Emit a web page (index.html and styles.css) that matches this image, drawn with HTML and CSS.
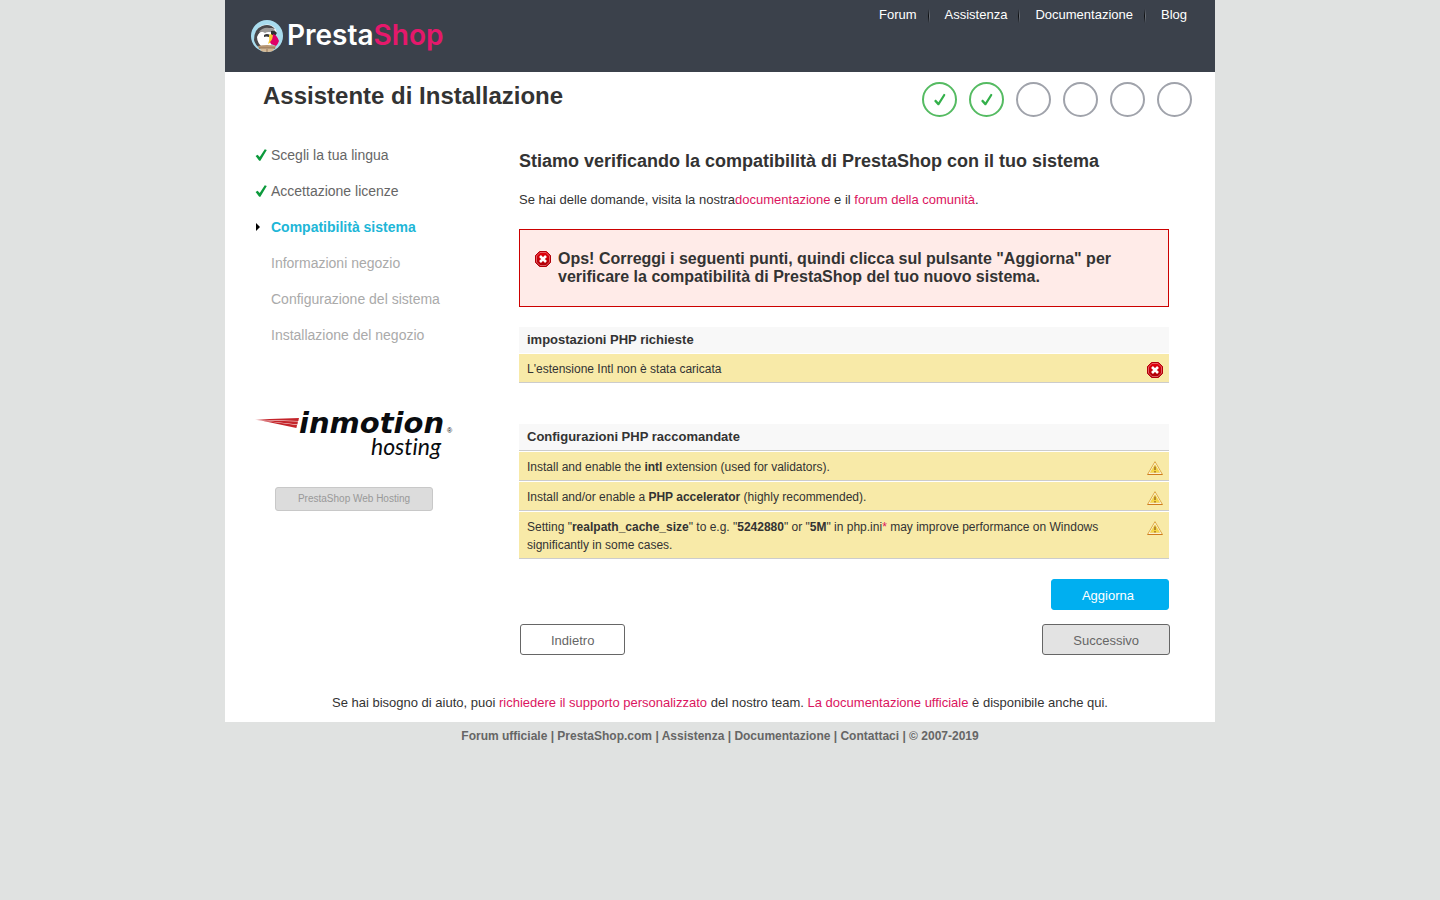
FILE: index.html
```html
<!DOCTYPE html>
<html lang="it">
<head>
    <meta charset="UTF-8">
    <meta name="viewport" content="width=device-width, initial-scale=1.0">
    <title>PrestaShop - Assistente di Installazione</title>
    <link rel="stylesheet" href="styles.css">
</head>
<body>
    <!-- shared icons -->
    <svg class="sprite" aria-hidden="true">
        <symbol id="icon-tick" viewBox="0 0 12 12">
            <path d="M0.6 7 L2.6 5.8 L4.7 8 L9.8 0.2 L11.8 1 L5.4 11.8 L4.2 11.8 Z" fill="#0c9a3c"/>
        </symbol>
        <symbol id="icon-step" viewBox="0 0 12 13">
            <path d="M0.4 7.4 L1.8 6.6 L4.4 9.2 L9.8 0.8 L11.2 1.2 L11.2 2.6 L5.1 12.2 L3.8 12.2 L0.4 8.5 Z" fill="#33b04a"/>
        </symbol>
        <symbol id="icon-error" viewBox="0 0 16 16">
            <path d="M4.5 0.5 H11.5 L15.5 4.5 V11.5 L11.5 15.5 H4.5 L0.5 11.5 V4.5 Z" fill="url(#red)" stroke="#b0000a"/>
            <path d="M5 1.5 H11 L14.5 5 V11 L11 14.5 H5 L1.5 11 V5 Z" fill="none" stroke="#e8727a" stroke-width="0.8"/>
            <path d="M5 5 L11 11 M11 5 L5 11" stroke="#fff" stroke-width="2.6"/>
        </symbol>
        <symbol id="icon-warning" viewBox="0 0 16 16">
            <path d="M8 1.6 L15.4 14.4 H0.6 Z" fill="#fffbe8" stroke="#dfa944" stroke-linejoin="round"/>
            <path d="M0.5 14.5 H15.5" stroke="#cf7a1e"/>
            <path d="M8 4.6 L12.8 12.6 H3.2 Z" fill="#f4d648" stroke="#efcb4e" stroke-width="0.6"/>
            <path d="M7 6.5 H9 V10 H7 Z M7 11 H9 V12.4 H7 Z" fill="#b88a2c"/>
        </symbol>
        <linearGradient id="red" x1="0" y1="0" x2="0" y2="1">
            <stop offset="0" stop-color="#e8000c"/>
            <stop offset="1" stop-color="#a80008"/>
        </linearGradient>
    </svg>

    <div class="container">
        <header class="header">
            <a class="logo" href="#" aria-label="PrestaShop">
                <svg width="196" height="36" viewBox="0 0 196 36">
                    <circle cx="16" cy="18" r="16" fill="#a9dcee"/>
                    <!-- head -->
                    <path d="M4 23 Q3 12 10 8 Q18 4 24 10 L26 15 L22 19 L20 27 L22 30 H10 Q5 28 4 23 Z" fill="#fff"/>
                    <path d="M3 22 Q3 11 11 8 Q19 5 24 11 Q17 9 13 13 Q8 13 6 19 Q6 25 12 30 H9 Q4 27 3 22 Z" fill="#48484b"/>
                    <path d="M8 14 Q12 9 18 10 Q22 10 24 12 L23 15 Q17 13 14 15 Q11 13 8 14 Z" fill="#9c9a98"/>
                    <path d="M13 17 Q16 15 19 17 L18 19 Q15 18 13 19 Z" fill="#3a3a3c"/>
                    <!-- beak -->
                    <path d="M20 13 Q24 12 26 15 L24 18 L20 17 Z" fill="#2f2f33"/>
                    <path d="M18 17 Q22 15 22 19 Q22 24 17 26 Q19 22 18 17 Z" fill="#f5c62c"/>
                    <path d="M20 26 L19 24 Q22 21 22 16 Q26 17 28 23 Q27 26 25 28 Z" fill="#df0067"/>
                    <!-- perch -->
                    <path d="M7 28 Q16 26 25 28 L24 31 H8 Z" fill="#b89773"/>
                    <path d="M9 30 H23 L22 33 Q16 35 10 33 Z" fill="#d3b794"/>
                    <path d="M8 30 H24 M16 31 V34" fill="none" stroke="#7c6149" stroke-width="0.7"/>
                    <text class="logo-text" x="36" y="27">Presta<tspan class="logo-accent">Shop</tspan></text>
                </svg>
            </a>
            <nav class="nav">
                <a href="#">Forum</a>
                <a href="#">Assistenza</a>
                <a href="#">Documentazione</a>
                <a href="#">Blog</a>
            </nav>
        </header>

        <div class="page">
            <div class="title-bar">
                <h1>Assistente di Installazione</h1>
                <ol class="progress" aria-label="Avanzamento">
                    <li class="done"><svg width="12" height="13"><use href="#icon-step"/></svg></li>
                    <li class="done"><svg width="12" height="13"><use href="#icon-step"/></svg></li>
                    <li></li>
                    <li></li>
                    <li></li>
                    <li></li>
                </ol>
            </div>

            <div class="columns">
                <aside class="sidebar">
                    <ol class="steps">
                        <li class="finished"><svg width="12" height="12"><use href="#icon-tick"/></svg><a href="#">Scegli la tua lingua</a></li>
                        <li class="finished"><svg width="12" height="12"><use href="#icon-tick"/></svg><a href="#">Accettazione licenze</a></li>
                        <li class="selected"><svg width="12" height="8"><path d="M1 0 L5 4 L1 8 Z" fill="#000"/></svg>Compatibilità sistema</li>
                        <li>Informazioni negozio</li>
                        <li>Configurazione del sistema</li>
                        <li>Installazione del negozio</li>
                    </ol>
                    <div class="partner">
                        <svg width="198" height="54" viewBox="0 0 198 54">
                            <path d="M0 10.5 L44 9 L43.3 12 Z" fill="#c4252b"/>
                            <path d="M2 11 L43 12.6 L42.4 15.4 Z" fill="#c4252b"/>
                            <path d="M6 11.6 L42 16 L41.4 19 Z" fill="#c4252b"/>
                            <text class="partner-name" x="44" y="24">inmotion</text>
                            <text class="partner-mark" x="192" y="24">®</text>
                            <text class="partner-sub" x="116" y="46">hosting</text>
                        </svg>
                        <a class="partner-button" href="#">PrestaShop Web Hosting</a>
                    </div>
                </aside>

                <main class="content">
                    <h2>Stiamo verificando la compatibilità di PrestaShop con il tuo sistema</h2>
                    <p class="intro">Se hai delle domande, visita la nostra<a href="#">documentazione</a> e il <a href="#">forum della comunità</a>.</p>

                    <div class="error-block" role="alert">
                        <svg width="16" height="16"><use href="#icon-error"/></svg>
                        <p>Ops! Correggi i seguenti punti, quindi clicca sul pulsante "Aggiorna" per verificare la compatibilità di PrestaShop del tuo nuovo sistema.</p>
                    </div>

                    <section class="checks required">
                        <h3>impostazioni PHP richieste</h3>
                        <ul>
                            <li><span>L'estensione Intl non è stata caricata</span><svg width="16" height="16"><use href="#icon-error"/></svg></li>
                        </ul>
                    </section>

                    <section class="checks">
                        <h3>Configurazioni PHP raccomandate</h3>
                        <ul>
                            <li><span>Install and enable the <b>intl</b> extension (used for validators).</span><svg width="16" height="16"><use href="#icon-warning"/></svg></li>
                            <li><span>Install and/or enable a <b>PHP accelerator</b> (highly recommended).</span><svg width="16" height="16"><use href="#icon-warning"/></svg></li>
                            <li><span>Setting "<b>realpath_cache_size</b>" to e.g. "<b>5242880</b>" or "<b>5M</b>" in php.ini<a href="#">*</a> may improve performance on Windows significantly in some cases.</span><svg width="16" height="16"><use href="#icon-warning"/></svg></li>
                        </ul>
                    </section>

                    <div class="refresh">
                        <button class="button primary" type="button">Aggiorna</button>
                    </div>
                    <div class="buttons">
                        <button class="button" type="button">Indietro</button>
                        <button class="button disabled" type="button" disabled>Successivo</button>
                    </div>
                </main>
            </div>

            <p class="help">Se hai bisogno di aiuto, puoi <a href="#">richiedere il supporto personalizzato</a> del nostro team. <a href="#">La documentazione ufficiale</a> è disponibile anche qui.</p>
        </div>

        <footer class="footer">
            <a href="#">Forum ufficiale</a> | <a href="#">PrestaShop.com</a> | <a href="#">Assistenza</a> | <a href="#">Documentazione</a> | <a href="#">Contattaci</a> | © 2007-2019
        </footer>
    </div>
</body>
</html>
```
FILE: styles.css
```css
* {
    box-sizing: border-box;
}
body {
    margin: 0;
    background-color: #e0e2e1;
    color: #333;
    font-family: Arial, "Liberation Sans", sans-serif;
    font-size: 13px;
    line-height: 18px;
}
h1, h2, h3, p, ul, ol {
    margin: 0;
    padding: 0;
}
ul, ol {
    list-style: none;
}
a {
    color: #db1560;
    text-decoration: none;
}
a:hover {
    text-decoration: underline;
}
svg {
    display: block;
    flex-shrink: 0;
    overflow: visible;
}
.sprite {
    position: absolute;
    width: 0;
    height: 0;
}
.container {
    max-width: 990px;
    margin: 0 auto;
}

/* header */
.header {
    display: flex;
    justify-content: space-between;
    align-items: flex-start;
    padding: 6px 28px 18px 26px;
    background-color: #3b414b;
}
.logo {
    margin-top: 12px;
}
.logo-text {
    font-family: Inter, sans-serif;
    font-size: 28px;
    font-weight: 600;
    fill: #fff;
}
.logo-accent {
    fill: #e5186b;
}
.nav {
    display: flex;
}
.nav a {
    color: #fff;
}
.nav a + a {
    margin-left: 11px;
    padding-left: 17px;
    background: linear-gradient(to bottom, #3b414b, #0c0d0f, #3b414b) no-repeat left 3px / 1px 14px,
        linear-gradient(to bottom, #3b414b, #6b7077, #3b414b) no-repeat 1px 3px / 1px 14px;
}

/* page */
.page {
    padding-bottom: 10px;
    background-color: #fff;
}
.title-bar {
    display: flex;
    justify-content: space-between;
    padding: 10px 23px 0 38px;
}
h1 {
    font-size: 24px;
    line-height: 28px;
}
.progress {
    display: flex;
    gap: 12px;
}
.progress li {
    display: flex;
    justify-content: center;
    align-items: center;
    width: 35px;
    height: 35px;
    border: 2px solid #a0a3ab;
    border-radius: 50%;
}
.progress .done {
    border-color: #55bb62;
}
.columns {
    display: flex;
    justify-content: space-between;
    padding: 20px 46px 0 30px;
}

/* sidebar */
.sidebar {
    width: 198px;
}
.steps li {
    display: flex;
    align-items: center;
    gap: 4px;
    padding-left: 16px;
    color: #aaa;
    font-size: 14px;
    line-height: 36px;
}
.steps .finished, .steps .selected {
    padding-left: 0;
}
.steps .finished a {
    color: #666;
}
.steps .selected {
    color: #20b6d7;
    font-weight: bold;
}
.partner {
    display: flex;
    flex-direction: column;
    align-items: center;
    gap: 24px;
    padding-top: 56px;
}
.partner-name {
    font-family: "DejaVu Sans", sans-serif;
    font-size: 29px;
    font-style: italic;
    font-weight: bold;
    fill: #0a0c0f;
}
.partner-sub {
    font-family: Lato, sans-serif;
    font-size: 23px;
    font-style: italic;
    font-variant-ligatures: none;
    fill: #0a0c0f;
}
.partner-mark {
    font-size: 7px;
    fill: #0a0c0f;
}
.partner-button {
    width: 158px;
    border: 1px solid #c8c8c8;
    border-radius: 3px;
    background-color: #dcdcdc;
    color: #999;
    font-size: 10px;
    line-height: 22px;
    text-align: center;
}

/* content */
.content {
    width: 650px;
    padding-top: 13px;
}
h2 {
    font-size: 18px;
    line-height: 22px;
}
.intro {
    margin-top: 19px;
}
.error-block {
    display: flex;
    gap: 7px;
    margin: 20px 0;
    padding: 20px 15px;
    border: 1px solid #c00;
    background-color: #ffebe8;
}
.error-block p {
    font-size: 16px;
    font-weight: bold;
    line-height: 18px;
}
.error-block svg {
    margin-top: 1px;
}
.checks h3 {
    padding: 4px 8px;
    border-bottom: 1px solid #ccc;
    background-color: #f8f8f8;
    font-size: 13px;
}
.checks li {
    display: flex;
    justify-content: space-between;
    gap: 40px;
    margin-top: 1px;
    padding: 6px 6px 4px 8px;
    border-bottom: 1px solid #ccc;
    background-color: #f8eaa8;
    font-size: 12px;
}
.checks svg {
    margin-top: 2px;
}
.required {
    margin-bottom: 41px;
}
.required h3 {
    border-bottom: 0;
}
.refresh {
    display: flex;
    justify-content: flex-end;
    margin-top: 20px;
}
.buttons {
    display: flex;
    justify-content: space-between;
    margin: 14px -1px 0 1px;
}
.button {
    padding: 7px 30px 5px;
    border: 1px solid #666;
    border-radius: 3px;
    background-color: #fff;
    color: #666;
    font-family: inherit;
    font-size: 13px;
    line-height: 17px;
    cursor: pointer;
}
.primary {
    padding-left: 30px;
    padding-right: 34px;
    border-color: #00aff0;
    background-color: #00aff0;
    color: #fff;
}
.disabled {
    background-color: #e3e3e3;
    cursor: default;
}

/* bottom */
.help {
    margin-top: 39px;
    text-align: center;
}
.footer {
    padding: 5px 0;
    color: #666;
    font-size: 12px;
    font-weight: bold;
    text-align: center;
}
.footer a {
    color: #666;
}
```
